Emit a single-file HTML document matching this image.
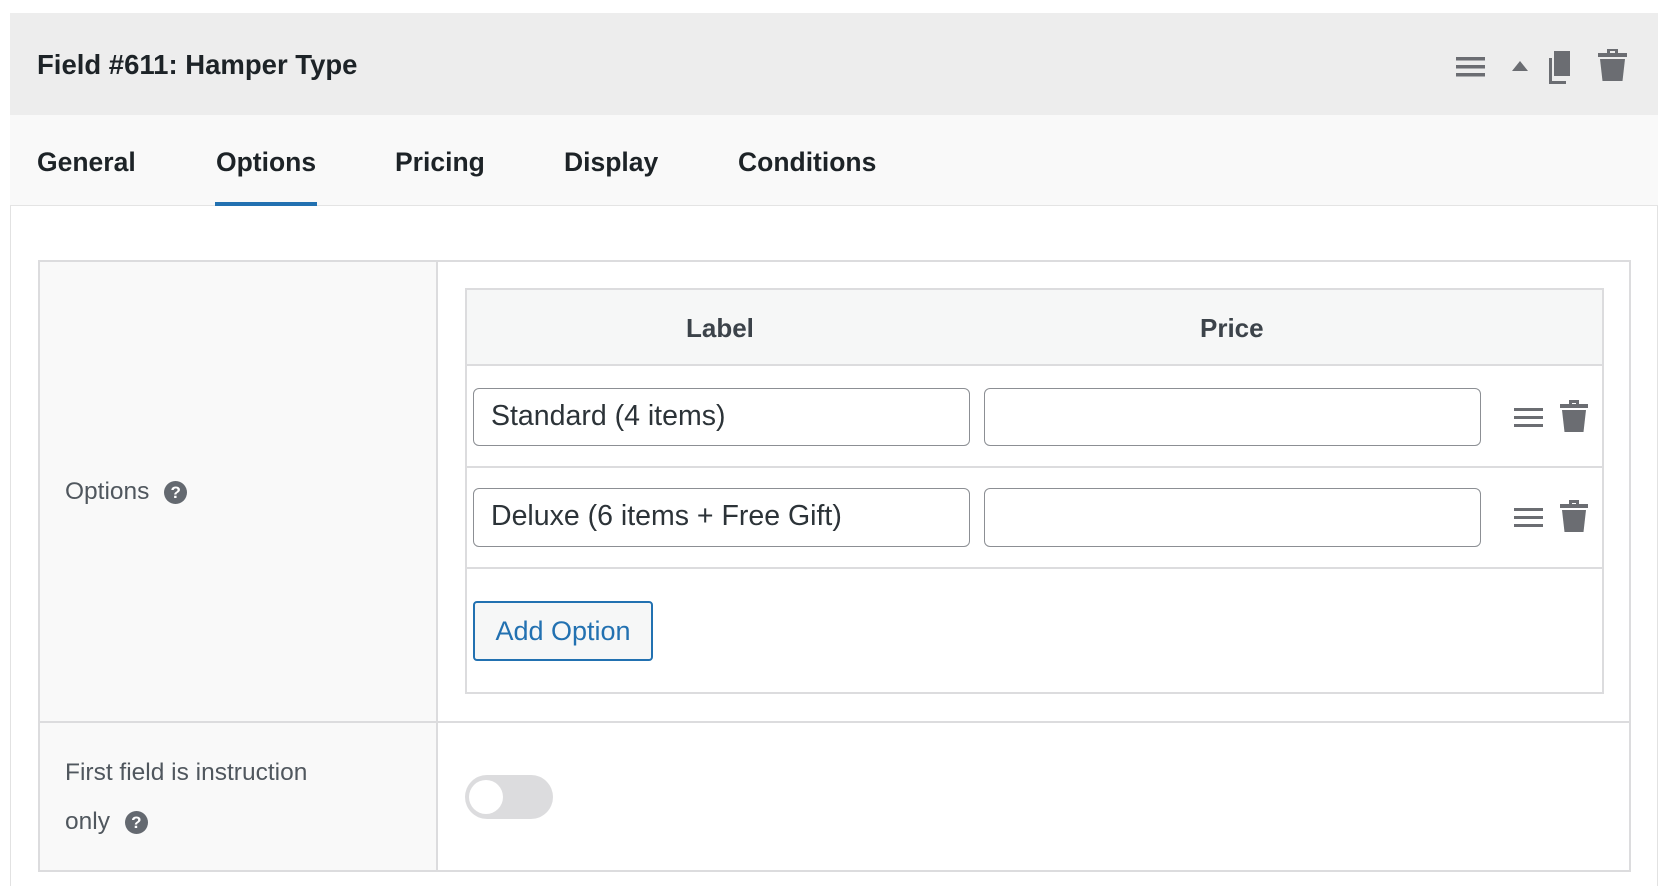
<!DOCTYPE html>
<html><head><meta charset="utf-8"><style>
*{margin:0;padding:0;box-sizing:border-box}
html,body{width:1674px;height:886px;overflow:hidden}
body{background:#fff;position:relative;font-family:"Liberation Sans",Helvetica,Arial,sans-serif;color:#1d2327}
.a{position:absolute}
.t{font-weight:bold;font-size:26.5px;color:#1d2327;white-space:nowrap}
.inp{position:absolute;border:1.5px solid #8c8f94;border-radius:6px;background:#fff;font-size:28.5px;color:#2c3338;padding-left:17px;line-height:55px}
.lbl{font-size:24.5px;color:#50575e;white-space:nowrap}
.help{display:inline-block;width:23px;height:23px;border-radius:50%;background:#646970;color:#fff;font-size:17px;font-weight:bold;text-align:center;line-height:23px;vertical-align:middle}
</style></head><body>
<div class="a" style="left:10px;top:13px;width:1648px;height:880px;border:1px solid #e2e2e2;background:#fff"></div>
<div class="a" style="left:10px;top:13px;width:1648px;height:102px;background:#ededed"></div>
<div class="a t" style="left:37px;top:49px;font-size:27.5px">Field #611: Hamper Type</div>
<svg class="a" style="left:1450px;top:40px" width="190" height="50" viewBox="0 0 190 50">
<g fill="#6b6d72">
<rect x="6" y="17" width="29" height="3.5"/><rect x="6" y="25" width="29" height="3.5"/><rect x="6" y="33" width="29" height="3.5"/>
<polygon points="62,31 70,21 78,31"/>
<path d="M104 11h16v25h-16z"/><path d="M99 18h3v23h14v3h-17z"/>
<path d="M148 13h29v4h-29z"/><path d="M157 9h11v4h-3v-2h-5v2h-3z"/><path d="M150 19h25l-2.5 22h-20z"/>
</g></svg>
<div class="a" style="left:10px;top:115px;width:1648px;height:91px;background:#f9f9f9;border-bottom:1px solid #e4e4e4"></div>
<div class="a t" style="left:37px;top:147px">General</div>
<div class="a t" style="left:216px;top:147px">Options</div>
<div class="a t" style="left:395px;top:147px">Pricing</div>
<div class="a t" style="left:564px;top:147px">Display</div>
<div class="a t" style="left:738px;top:147px">Conditions</div>
<div class="a" style="left:215px;top:202px;width:102px;height:4px;background:#2271b1"></div>

<div class="a" style="left:38px;top:260px;width:1593px;height:612px;border:2px solid #dcdcde;background:#fff"></div>
<div class="a" style="left:40px;top:262px;width:398px;height:608px;background:#f9f9f9;border-right:2px solid #dcdcde"></div>
<div class="a" style="left:40px;top:721px;width:1589px;height:2px;background:#dcdcde"></div>
<div class="a lbl" style="left:65px;top:478px">Options <span class="help" style="margin-left:8px">?</span></div>
<div class="a lbl" style="left:65px;top:759px">First field is instruction</div>
<div class="a lbl" style="left:65px;top:808px">only <span class="help" style="margin-left:8px">?</span></div>

<div class="a" style="left:465px;top:288px;width:1139px;height:406px;border:2px solid #dcdcde;background:#fff"></div>
<div class="a" style="left:467px;top:290px;width:1135px;height:76px;background:#f6f7f7;border-bottom:2px solid #dcdcde"></div>
<div class="a" style="left:467px;top:466px;width:1135px;height:2px;background:#dcdcde"></div>
<div class="a" style="left:467px;top:567px;width:1135px;height:2px;background:#dcdcde"></div>
<div class="a" style="left:686px;top:313px;font-weight:bold;font-size:26px;color:#3c434a">Label</div>
<div class="a" style="left:1200px;top:313px;font-weight:bold;font-size:26px;color:#3c434a">Price</div>

<div class="inp" style="left:473px;top:388px;width:497px;height:58px">Standard (4 items)</div>
<div class="inp" style="left:984px;top:388px;width:497px;height:58px"></div>
<div class="inp" style="left:473px;top:488px;width:497px;height:59px">Deluxe (6 items + Free Gift)</div>
<div class="inp" style="left:984px;top:488px;width:497px;height:59px"></div>
<svg class="a" style="left:1510px;top:398px" width="85" height="40" viewBox="0 0 85 40"><g fill="#6b6d72">
<rect x="4" y="10" width="29" height="3"/><rect x="4" y="18" width="29" height="3"/><rect x="4" y="26" width="29" height="3"/>
<path d="M50 6h28v4h-28z"/><path d="M59 2h10v4h-3v-1h-4v1h-3z"/><path d="M52 12h24l-2.5 22h-19z"/></g></svg>
<svg class="a" style="left:1510px;top:498px" width="85" height="40" viewBox="0 0 85 40"><g fill="#6b6d72">
<rect x="4" y="10" width="29" height="3"/><rect x="4" y="18" width="29" height="3"/><rect x="4" y="26" width="29" height="3"/>
<path d="M50 6h28v4h-28z"/><path d="M59 2h10v4h-3v-1h-4v1h-3z"/><path d="M52 12h24l-2.5 22h-19z"/></g></svg>

<div class="a" style="left:473px;top:601px;width:180px;height:60px;border:2px solid #2271b1;border-radius:4px;background:#f6f7f7;color:#2271b1;font-size:27px;text-align:center;line-height:56px">Add Option</div>

<div class="a" style="left:465px;top:775px;width:88px;height:44px;border-radius:22px;background:#dcdcde"></div>
<div class="a" style="left:469px;top:780px;width:34px;height:34px;border-radius:50%;background:#fff"></div>
</body></html>
